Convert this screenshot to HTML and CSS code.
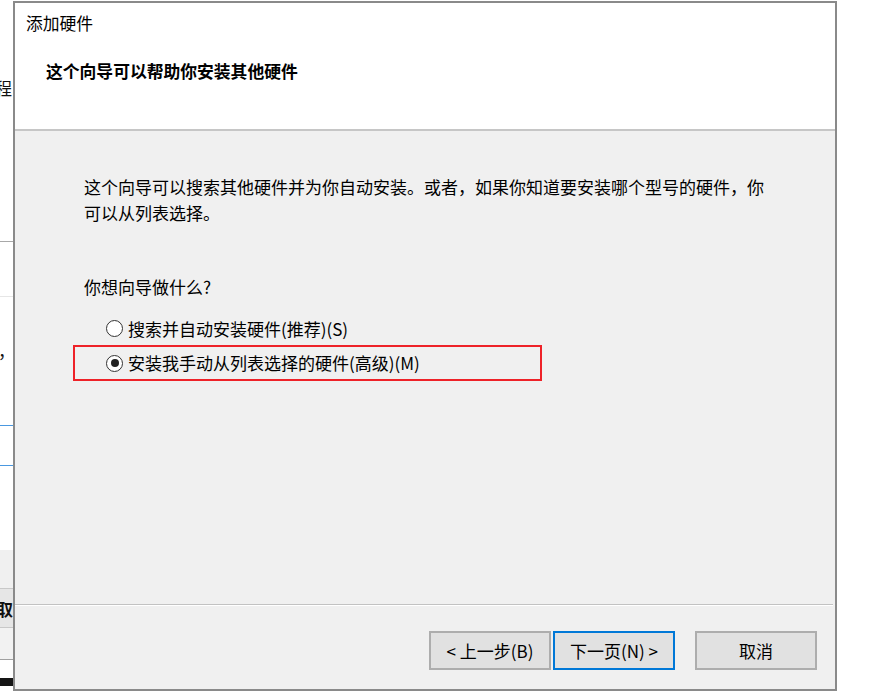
FILE: index.html
```html
<!DOCTYPE html>
<html lang="zh-CN">
<head>
<meta charset="utf-8">
<title>添加硬件</title>
<link rel="stylesheet" href="styles.css">
</head>
<body>
<div class="desktop">
  <div class="backwin">
    <div class="bw-top"><span class="bw-char">程</span></div>
    <div class="bw-line"></div>
    <div class="bw-gap1"></div>
    <div class="bw-light"></div>
    <div class="bw-comma">，</div>
    <div class="bw-blue"></div>
    <div class="bw-gap2"></div>
    <div class="bw-blue"></div>
    <div class="bw-gap3"></div>
    <div class="bw-gray"></div>
    <div class="bw-btn"><span class="bw-char">取</span></div>
    <div class="bw-strip"></div>
    <div class="bw-white"></div>
    <div class="bw-black"></div>
  </div>

  <div class="dialog">
    <div class="header">
      <div class="title">添加硬件</div>
      <div class="subtitle">这个向导可以帮助你安装其他硬件</div>
    </div>
    <div class="body">
      <p class="intro">这个向导可以搜索其他硬件并为你自动安装。或者，如果你知道要安装哪个型号的硬件，你<br>可以从列表选择。</p>
      <p class="question">你想向导做什么?</p>
      <div class="options">
        <div class="option">
          <span class="radio"></span>
          <span class="label">搜索并自动安装硬件(推荐)(S)</span>
        </div>
        <div class="option highlighted">
          <span class="radio checked"></span>
          <span class="label">安装我手动从列表选择的硬件(高级)(M)</span>
        </div>
      </div>
    </div>
    <div class="footer">
      <button class="btn">&lt; 上一步(B)</button>
      <button class="btn default">下一页(N) &gt;</button>
      <button class="btn cancel">取消</button>
    </div>
  </div>
</div>
</body>
</html>
```

FILE: styles.css
```css
html, body {
  margin: 0;
  padding: 0;
  background: #ffffff;
}

body {
  font-family: "Noto Sans CJK SC", "Noto Sans", sans-serif;
  color: #000;
}

.desktop {
  position: relative;
  width: 886px;
  height: 692px;
  overflow: hidden;
  background: #ffffff;
}

/* window partially visible behind the dialog */
.backwin {
  position: absolute;
  left: 0;
  top: 0;
  width: 13px;
  height: 692px;
  overflow: hidden;
  display: flex;
  flex-direction: column;
  background: #ffffff;
}

.bw-char {
  display: block;
  font-size: 17px;
  line-height: 20px;
  margin-left: -5px;
  color: #111;
}

.bw-top {
  height: 241px;
  padding-top: 78px;
  box-sizing: border-box;
}

.bw-line {
  height: 1px;
  background: #a8a8a8;
}

.bw-gap1 { height: 54px; }

.bw-light {
  height: 1px;
  background: #e6e6e6;
}

.bw-comma {
  height: 128px;
  padding-top: 44px;
  box-sizing: border-box;
  font-size: 17px;
  line-height: 20px;
  margin-left: -2px;
  color: #111;
}

.bw-blue {
  height: 1px;
  background: #4a98e0;
}

.bw-gap2 { height: 39px; }
.bw-gap3 { height: 84px; }

.bw-gray {
  height: 38px;
  background: #f0f0f0;
  border-bottom: 1px solid #c8c8c8;
}

.bw-btn {
  height: 39px;
  background: #e6e6e6;
  border-bottom: 1px solid #c8c8c8;
  padding-top: 10px;
  box-sizing: border-box;
}

.bw-btn .bw-char {
  margin-left: -4px;
  font-weight: 600;
}

.bw-strip {
  height: 31px;
  background: #f2f2f2;
  border-bottom: 1px solid #a0a0a0;
}

.bw-white { height: 18px; background: #fff; }
.bw-black { height: 8px; background: #151515; }

/* dialog */
.dialog {
  position: absolute;
  left: 13px;
  top: 1px;
  width: 820px;
  height: 686px;
  border: 2px solid #8a8a8a;
  display: flex;
  flex-direction: column;
  background: #f0f0f0;
}

.header {
  height: 128px;
  background: #ffffff;
  border-bottom: 2px solid #c6c6c6;
  padding-left: 11px;
  box-sizing: border-box;
  flex: none;
}

.title {
  font-size: 16.8px;
  line-height: 22px;
  padding-top: 9px;
}

.subtitle {
  font-size: 16.8px;
  font-weight: 700;
  line-height: 22px;
  margin-top: 26px;
  margin-left: 20px;
}

.body {
  flex: 1;
  padding-left: 69px;
  padding-top: 43px;
  border-bottom: 1px solid #c2c2c2;
  box-shadow: 0 1px 0 #ffffff;
  margin-right: 2px;
}

.intro {
  margin: 0;
  font-size: 17px;
  line-height: 26px;
}

.question {
  margin: 48px 0 0 0;
  font-size: 17px;
  line-height: 26px;
}

.options {
  margin-top: 12px;
  margin-left: -11px;
  display: flex;
  flex-direction: column;
}

.option {
  display: flex;
  align-items: center;
  height: 33px;
  padding-left: 31px;
  width: 469px;
  box-sizing: border-box;
  border: 2px solid transparent;
}

.option.highlighted {
  border-color: #ee2228;
  height: 36px;
}

.radio {
  width: 15px;
  height: 15px;
  border: 1.5px solid #333;
  border-radius: 50%;
  background: #fff;
  box-sizing: content-box;
  margin-right: 5px;
  position: relative;
  flex: none;
}

.radio.checked::after {
  content: "";
  position: absolute;
  left: 3.5px;
  top: 3.5px;
  width: 8px;
  height: 8px;
  border-radius: 50%;
  background: #222;
}

.label {
  font-size: 17px;
  line-height: 22px;
  white-space: nowrap;
}

.footer {
  height: 84px;
  flex: none;
  display: flex;
  align-items: flex-start;
  justify-content: flex-end;
  padding-top: 26px;
  padding-right: 18px;
  box-sizing: border-box;
}

.btn {
  width: 122px;
  height: 39px;
  background: #e1e1e1;
  border: 2px solid #adadad;
  font-family: "Noto Sans CJK SC", "Noto Sans", sans-serif;
  font-size: 17px;
  color: #000;
  padding: 0;
  margin: 0;
}

.btn.default {
  border-color: #0078d7;
  margin-left: 2px;
}

.btn.cancel {
  margin-left: 20px;
}
```
